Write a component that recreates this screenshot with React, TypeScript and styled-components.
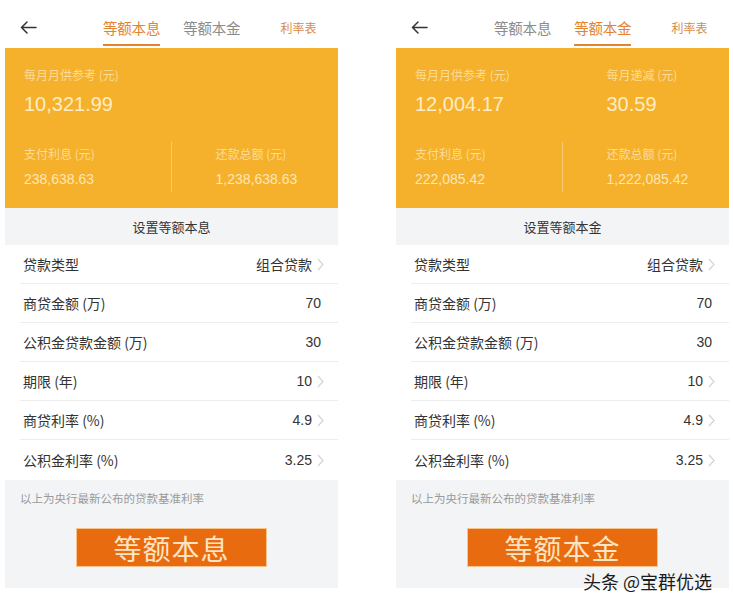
import styled, { createGlobalStyle } from "styled-components";

// two screenshots of the mortgage calculator, side by side

interface Row {
    label: string;
    value: string;
    more?: boolean;
}

interface Stat {
    label: string;
    value: string;
}

interface PhoneProps {
    active: number;
    title: string;
    monthly: Stat;
    decrease?: Stat;
    interest: Stat;
    total: Stat;
};

const rows: Row[] = [
    { label: '贷款类型', value: '组合贷款', more: true },
    { label: '商贷金额 (万)', value: '70' },
    { label: '公积金贷款金额 (万)', value: '30' },
    { label: '期限 (年)', value: '10', more: true },
    { label: '商贷利率 (%)', value: '4.9', more: true },
    { label: '公积金利率 (%)', value: '3.25', more: true },
];

const tabs = ['等额本息', '等额本金'];

function BackArrow() {
    return <svg width="17" height="13" viewBox="0 0 17 13">
        <path d="M16 6.5H1.5M7 1L1.5 6.5L7 12" fill="none" stroke="#333" strokeWidth="1.5" strokeLinecap="round" strokeLinejoin="round" />
    </svg>
}

function Chevron() {
    return <svg width="7" height="13" viewBox="0 0 7 13">
        <path d="M1 1l5 5.5L1 12" fill="none" stroke="#d6d6d6" strokeWidth="1.3" />
    </svg>
}

function Phone({ active, title, monthly, decrease, interest, total }: PhoneProps) {
    return <Screen>
        <NavBar>
            <BackArrow />
            <Tabs>
                {tabs.map((t, i) => <Tab key={t} $active={i === active}>{t}</Tab>)}
            </Tabs>
            <RateLink>利率表</RateLink>
        </NavBar>
        <Card>
            <CardRow>
                <Cell>
                    <CardLabel>{monthly.label}</CardLabel>
                    <BigValue>{monthly.value}</BigValue>
                </Cell>
                {decrease && <Cell $right>
                    <CardLabel>{decrease.label}</CardLabel>
                    <BigValue>{decrease.value}</BigValue>
                </Cell>}
            </CardRow>
            <CardRow $bottom>
                <Cell $divider>
                    <CardLabel>{interest.label}</CardLabel>
                    <SmallValue>{interest.value}</SmallValue>
                </Cell>
                <Cell $right>
                    <CardLabel>{total.label}</CardLabel>
                    <SmallValue>{total.value}</SmallValue>
                </Cell>
            </CardRow>
        </Card>
        <SectionTitle>设置{title}</SectionTitle>
        <List>
            {rows.map(r => <ListRow key={r.label}>
                <span>{r.label}</span>
                <Value $more={r.more}>
                    {r.value}
                    {r.more && <Chevron />}
                </Value>
            </ListRow>)}
        </List>
        <Footer>
            <Note>以上为央行最新公布的贷款基准利率</Note>
            <BigButton>{title}</BigButton>
        </Footer>
    </Screen>
}

export default function App() {
    return <Page>
        <GlobalStyle />
        <Phone
            active={0}
            title="等额本息"
            monthly={{ label: '每月月供参考 (元)', value: '10,321.99' }}
            interest={{ label: '支付利息 (元)', value: '238,638.63' }}
            total={{ label: '还款总额 (元)', value: '1,238,638.63' }}
        />
        <Phone
            active={1}
            title="等额本金"
            monthly={{ label: '每月月供参考 (元)', value: '12,004.17' }}
            decrease={{ label: '每月递减 (元)', value: '30.59' }}
            interest={{ label: '支付利息 (元)', value: '222,085.42' }}
            total={{ label: '还款总额 (元)', value: '1,222,085.42' }}
        />
        <Watermark>头条 @宝群优选</Watermark>
    </Page>
};

const GlobalStyle = createGlobalStyle`
    body {
        margin: 0;
        background: #fff;
        font-family: "Noto Sans CJK SC", "Liberation Sans", sans-serif;
    }
`;

const Page = styled.div`
    position: relative;
    width: 733px;
    height: 608px;
    display: flex;
    gap: 58px;
    padding-left: 5px;
    box-sizing: border-box;
    overflow: hidden;
`;

const Screen = styled.section`
    width: 333px;
    display: flex;
    flex-direction: column;
`;

const NavBar = styled.header`
    height: 46px;
    display: flex;
    align-items: center;
    padding: 8px 0 0 15px;
    box-sizing: border-box;
    color: #333;
`;

const Tabs = styled.nav`
    display: flex;
    gap: 23px;
    margin-left: 66px;
    align-self: stretch;
`;

const Tab = styled.span<{ $active: boolean }>`
    display: flex;
    align-items: center;
    font-size: 14.5px;
    letter-spacing: -0.2px;
    color: ${p => p.$active ? '#e4832f' : '#8c8c8c'};
    border-bottom: 2px solid ${p => p.$active ? '#e4832f' : 'transparent'};
    padding-top: 2px;
`;

const RateLink = styled.span`
    font-size: 12px;
    color: #d68a4c;
    margin-left: 40px;
`;

const Card = styled.div`
    margin-top: 2px;
    height: 160px;
    box-sizing: border-box;
    background: #f5b12b;
    padding: 19px 0 16px;
    display: flex;
    flex-direction: column;
    justify-content: space-between;
`;

const CardRow = styled.div<{ $bottom?: boolean }>`
    display: grid;
    grid-template-columns: 1fr 1fr;
    height: ${p => p.$bottom ? '50px' : 'auto'};
`;

const Cell = styled.div<{ $right?: boolean; $divider?: boolean }>`
    display: flex;
    flex-direction: column;
    justify-content: center;
    padding-left: ${p => p.$right ? '44px' : '19px'};
    border-right: ${p => p.$divider ? '1px solid #f8cb6e' : 'none'};
`;

const CardLabel = styled.span`
    font-size: 12px;
    line-height: 16px;
    color: #fcdc98;
`;

const BigValue = styled.span`
    font-family: "Liberation Sans", "Noto Sans", sans-serif;
    font-size: 20px;
    line-height: 24px;
    margin-top: 9px;
    color: #fdecc5;
`;

const SmallValue = styled.span`
    font-family: "Liberation Sans", "Noto Sans", sans-serif;
    font-size: 14px;
    line-height: 18px;
    margin-top: 8px;
    color: #fde6b6;
`;

const SectionTitle = styled.div`
    height: 37px;
    display: flex;
    align-items: center;
    justify-content: center;
    background: #f3f4f6;
    font-size: 13px;
    color: #333;
`;

const List = styled.div`
    display: flex;
    flex-direction: column;
`;

const ListRow = styled.div`
    height: 39px;
    box-sizing: border-box;
    margin-left: 15px;
    padding: 0 17px 0 3px;
    display: flex;
    align-items: center;
    justify-content: space-between;
    font-size: 14px;
    color: #333;
    border-bottom: 1px solid #ededed;
    &:last-child {
        border-bottom: none;
        height: 40px;
    }
`;

const Value = styled.span<{ $more?: boolean }>`
    display: flex;
    align-items: center;
    gap: 5px;
    margin-right: ${p => p.$more ? '-3px' : '0'};
    font-family: "Liberation Sans", "Noto Sans CJK SC", sans-serif;
`;

const Footer = styled.div`
    height: 108px;
    box-sizing: border-box;
    background: #f3f4f6;
    padding: 10px 0 0 15px;
    display: flex;
    flex-direction: column;
`;

const Note = styled.span`
    font-size: 11.5px;
    line-height: 16px;
    color: #9a9a9a;
`;

const BigButton = styled.div`
    align-self: center;
    margin: 22px 0 0 -15px;
    width: 191px;
    height: 39px;
    box-sizing: border-box;
    display: flex;
    align-items: center;
    justify-content: center;
    background: #e96b0f;
    border: 1px solid #f8c48c;
    color: #fde5c3;
    font-size: 28px;
    letter-spacing: 1px;
`;

const Watermark = styled.span`
    position: absolute;
    left: 583px;
    top: 568px;
    font-size: 18px;
    color: #1c1c1c;
`;
